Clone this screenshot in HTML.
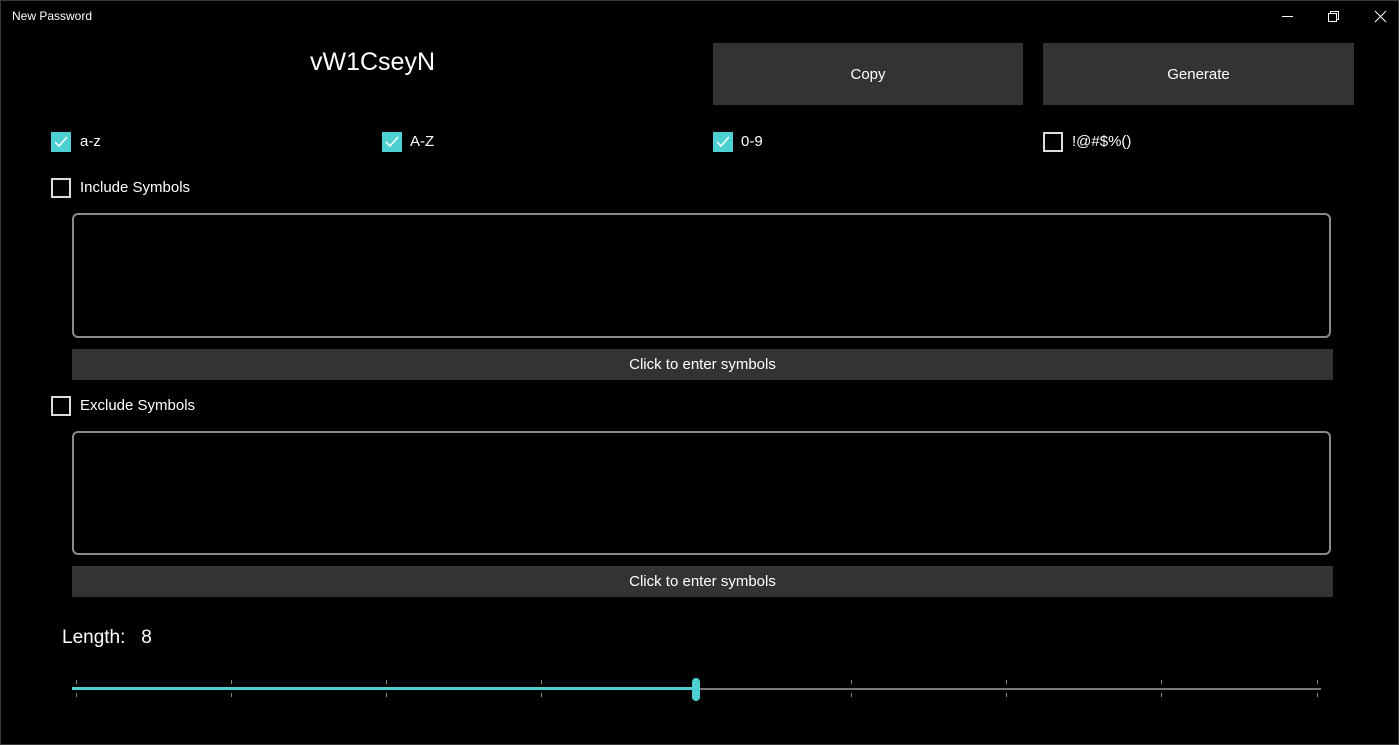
<!DOCTYPE html>
<html><head><style>
*{margin:0;padding:0;box-sizing:border-box}
body{width:1399px;height:745px;background:#000;color:#fff;font-family:"Liberation Sans",sans-serif;position:relative;overflow:hidden}
.a{position:absolute}
.btn{background:#333;color:#fff;display:flex;align-items:center;justify-content:center;font-size:15px}
.cb{position:absolute;width:20px;height:20px;border:2px solid #ddd}
.cb.on{background:#4cd0d2;border:none}
.lbl{position:absolute;font-size:15px}
.box{position:absolute;border:2px solid #8a8a8a;border-radius:6px}
.tk{position:absolute;width:1px;height:4px;background:#888}
</style></head><body>
<div class="a" style="left:0;top:0;width:1399px;height:745px;border:1px solid #3a3a3a"></div>
<div class="a" style="left:12px;top:9px;font-size:12px">New Password</div>
<svg class="a" style="left:1280px;top:10px" width="110" height="14">
<line x1="2" y1="6.5" x2="13" y2="6.5" stroke="#fff"/>
<rect x="48.5" y="3.5" width="8" height="8" fill="none" stroke="#fff"/>
<path d="M50.5 3.5V1.5h8v8h-2" fill="none" stroke="#fff"/>
<path d="M95 1l11 11M106 1l-11 11" stroke="#fff"/>
</svg>
<div class="a" style="left:310px;top:48px;font-size:25px">vW1CseyN</div>
<div class="a btn" style="left:713px;top:43px;width:310px;height:62px">Copy</div>
<div class="a btn" style="left:1043px;top:43px;width:311px;height:62px">Generate</div>

<div class="cb on" style="left:51px;top:132px"><svg width="20" height="20"><path d="M4 10l4 4 8-9" fill="none" stroke="#fff" stroke-width="1.5"/></svg></div>
<div class="lbl" style="left:80px;top:133px">a-z</div>
<div class="cb on" style="left:382px;top:132px"><svg width="20" height="20"><path d="M4 10l4 4 8-9" fill="none" stroke="#fff" stroke-width="1.5"/></svg></div>
<div class="lbl" style="left:410px;top:133px">A-Z</div>
<div class="cb on" style="left:713px;top:132px"><svg width="20" height="20"><path d="M4 10l4 4 8-9" fill="none" stroke="#fff" stroke-width="1.5"/></svg></div>
<div class="lbl" style="left:741px;top:133px">0-9</div>
<div class="cb" style="left:1043px;top:132px"></div>
<div class="lbl" style="left:1072px;top:133px">!@#$%()</div>

<div class="cb" style="left:51px;top:178px"></div>
<div class="lbl" style="left:80px;top:179px">Include Symbols</div>
<div class="box" style="left:72px;top:213px;width:1259px;height:125px"></div>
<div class="a btn" style="left:72px;top:349px;width:1261px;height:31px">Click to enter symbols</div>

<div class="cb" style="left:51px;top:396px"></div>
<div class="lbl" style="left:80px;top:397px">Exclude Symbols</div>
<div class="box" style="left:72px;top:431px;width:1259px;height:124px"></div>
<div class="a btn" style="left:72px;top:566px;width:1261px;height:31px">Click to enter symbols</div>

<div class="a" style="left:62px;top:627px;font-size:19px">Length:&nbsp;&nbsp;&nbsp;8</div>
<div class="a" style="left:72px;top:687px;width:624px;height:3px;background:#4cd0d2"></div>
<div class="a" style="left:696px;top:688px;width:625px;height:2px;background:#777"></div>
<div class="tk" style="left:76px;top:680px"></div><div class="tk" style="left:76px;top:693px"></div>
<div class="tk" style="left:231px;top:680px"></div><div class="tk" style="left:231px;top:693px"></div>
<div class="tk" style="left:386px;top:680px"></div><div class="tk" style="left:386px;top:693px"></div>
<div class="tk" style="left:541px;top:680px"></div><div class="tk" style="left:541px;top:693px"></div>
<div class="tk" style="left:851px;top:680px"></div><div class="tk" style="left:851px;top:693px"></div>
<div class="tk" style="left:1006px;top:680px"></div><div class="tk" style="left:1006px;top:693px"></div>
<div class="tk" style="left:1161px;top:680px"></div><div class="tk" style="left:1161px;top:693px"></div>
<div class="tk" style="left:1317px;top:680px"></div><div class="tk" style="left:1317px;top:693px"></div>
<div class="a" style="left:692px;top:678px;width:8px;height:23px;border-radius:4px;background:#4cd0d2"></div>
</body></html>
